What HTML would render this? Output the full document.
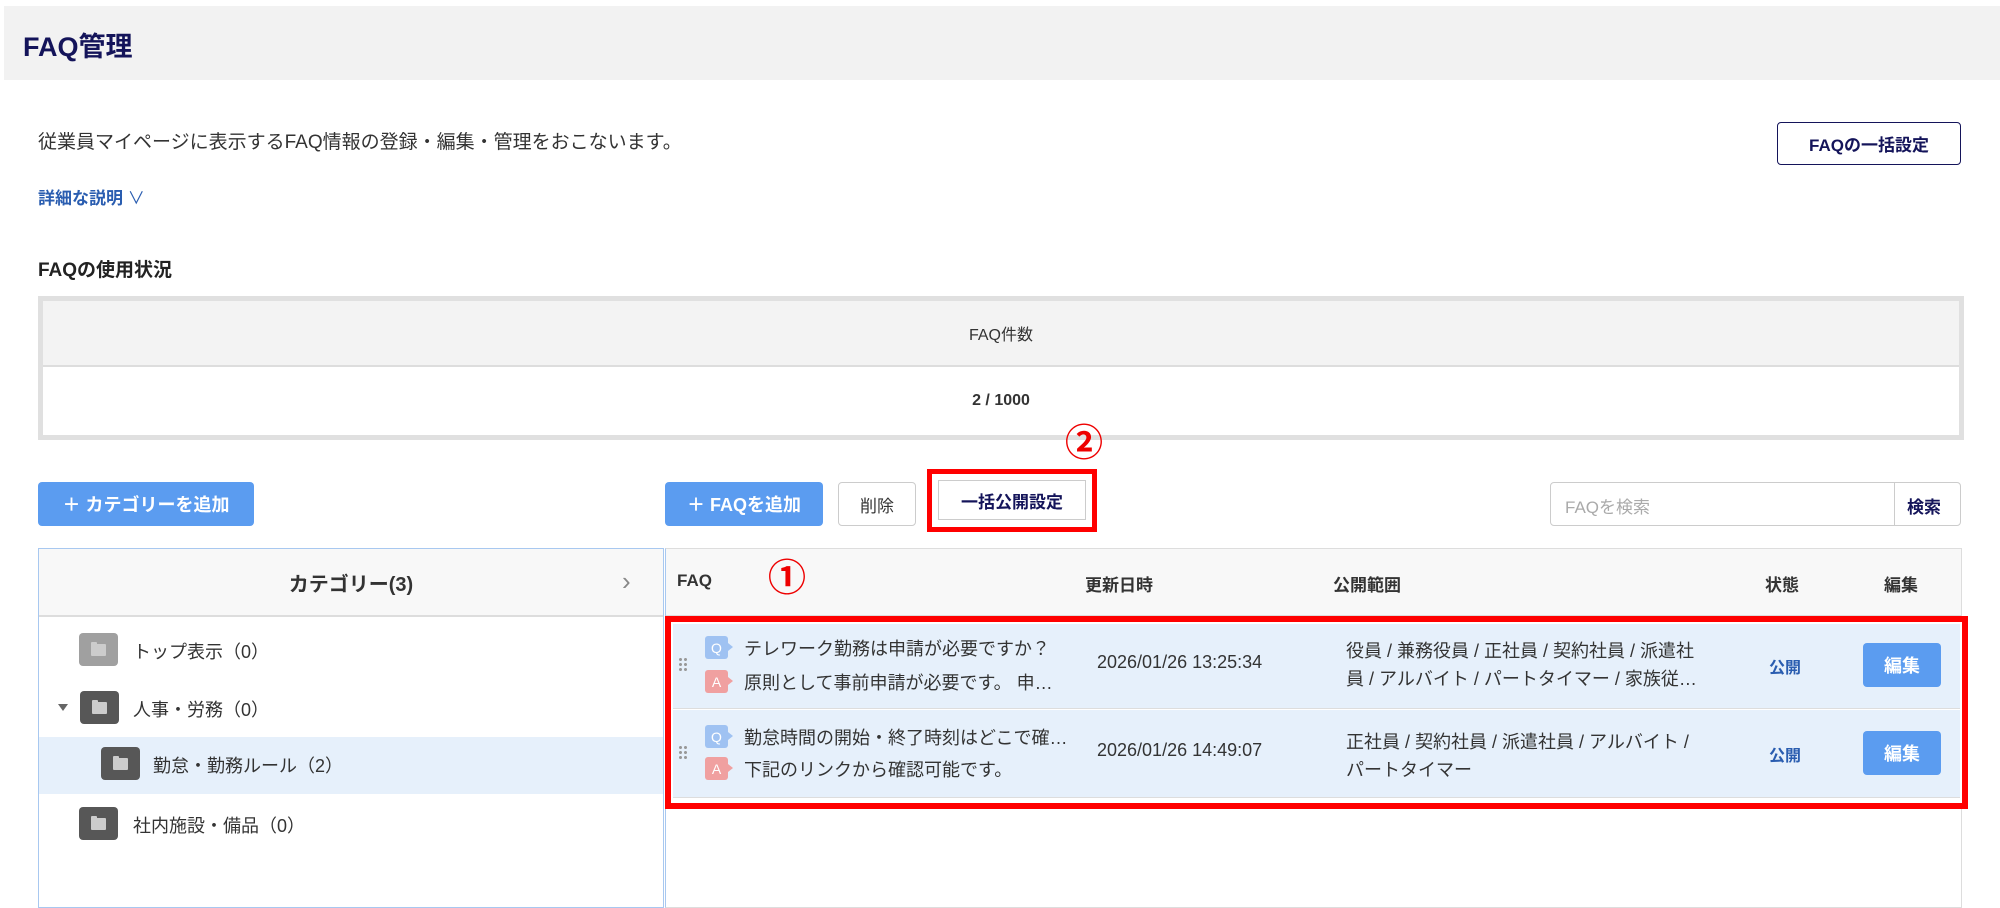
<!DOCTYPE html>
<html><head><meta charset="utf-8"><style>
*{box-sizing:border-box;margin:0;padding:0}
body{width:2000px;height:900px;overflow:hidden;background:#fff;font-family:"Liberation Sans","Noto Sans CJK JP",sans-serif;color:#333;position:relative}
.a{position:absolute;white-space:nowrap}
.btn{position:absolute;border-radius:4px;display:flex;align-items:center;justify-content:center;font-size:17px;font-weight:bold}
.blue{background:#5b9cf0;color:#fff}
.fold{position:absolute;width:39px;height:33px;border-radius:4px;background:#575757}
.fold:after{content:"";position:absolute;left:12px;top:11px;width:15px;height:12px;background:#ccc;border-radius:1px}
.fold:before{content:"";position:absolute;left:12px;top:9px;width:6px;height:3px;background:#ccc;border-radius:1px 1px 0 0}
.t{font-size:18px;color:#333}
.badge{position:absolute;width:23px;height:23px;border-radius:3px;color:#fff;font-size:14px;display:flex;align-items:center;justify-content:center}
.badge:after{content:"";position:absolute;right:-5px;top:7px;border-left:5px solid;border-top:4px solid transparent;border-bottom:4px solid transparent}
.q{background:#9fc2f2}.q:after{border-left-color:#9fc2f2}
.an{background:#f0a0a0}.an:after{border-left-color:#f0a0a0}
.dots{position:absolute;width:10px;height:16px;background-image:radial-gradient(circle,#999 1.4px,transparent 1.6px);background-size:5px 5px}
.circ{position:absolute;color:#e00;font-size:38px;font-weight:bold;line-height:1}
</style></head><body>
<div class="a" style="left:4px;top:6px;width:1996px;height:74px;background:#f2f2f2"></div>
<div class="a" style="left:23px;top:25px;font-size:27px;font-weight:bold;color:#14145a">FAQ管理</div>
<div class="a" style="left:38px;top:127px;font-size:19px;color:#333">従業員マイページに表示するFAQ情報の登録・編集・管理をおこないます。</div>
<div class="btn" style="left:1777px;top:122px;width:184px;height:43px;border:1.5px solid #14145a;color:#14145a;font-size:17px">FAQの一括設定</div>
<div class="a" style="left:38px;top:184px;font-size:17px;font-weight:bold;color:#2a5db0">詳細な説明 <span style="font-weight:normal">∨</span></div>
<div class="a" style="left:38px;top:255px;font-size:19px;font-weight:bold;color:#222">FAQの使用状況</div>
<div class="a" style="left:38px;top:296px;width:1926px;height:144px;border:5px solid #e0e0e0;background:#fff">
 <div style="height:66px;background:#f3f3f3;border-bottom:2px solid #ddd;display:flex;align-items:center;justify-content:center;font-size:16px">FAQ件数</div>
 <div style="height:68px;display:flex;align-items:center;justify-content:center;font-size:16px;font-weight:bold">2 / 1000</div>
</div>
<div class="btn blue" style="left:38px;top:482px;width:216px;height:44px;font-size:18px">＋ カテゴリーを追加</div>
<div class="btn blue" style="left:665px;top:482px;width:158px;height:44px;font-size:18px">＋ FAQを追加</div>
<div class="btn" style="left:838px;top:482px;width:78px;height:44px;border:1px solid #ccc;font-weight:normal;font-size:17px">削除</div>
<div class="a" style="left:927px;top:469px;width:170px;height:63px;border:5px solid #f00;background:#fff"><div style="margin:6px 0 0 6px;width:148px;height:40px;border:1px solid #ccc;display:flex;align-items:center;justify-content:center;font-weight:bold;font-size:17px;color:#14145a">一括公開設定</div></div>
<div class="circ" style="left:1065px;top:425px">②</div>
<div class="a" style="left:1550px;top:482px;width:411px;height:44px;border:1px solid #ccc;border-radius:4px;background:#fff">
 <span style="position:absolute;left:14px;top:10px;color:#aaa;font-size:17px">FAQを検索</span>
 <span style="position:absolute;left:343px;top:0;width:1px;height:42px;background:#ccc"></span>
 <span style="position:absolute;left:356px;top:10px;font-weight:bold;font-size:17px;color:#14145a">検索</span>
</div>
<div class="a" style="left:38px;top:548px;width:626px;height:360px;border:1px solid #a8c8f0;background:#fff">
 <div style="height:68px;background:#f8f8f8;border-bottom:2px solid #ddd;display:flex;align-items:center;justify-content:center;font-size:20px;font-weight:bold;color:#333">カテゴリー(3)</div>
 <div style="position:absolute;left:583px;top:17px;font-size:26px;color:#888">›</div>
 <div style="position:absolute;left:0;top:188px;width:624px;height:57px;background:#e6f0fb"></div>
</div>
<div class="fold" style="left:79px;top:633px;background:#a0a0a0"></div><div class="a t" style="left:133px;top:638px">トップ表示（0）</div>
<div class="a" style="left:58px;top:704px;border-top:7px solid #666;border-left:5px solid transparent;border-right:5px solid transparent"></div>
<div class="fold" style="left:80px;top:691px"></div><div class="a t" style="left:133px;top:696px">人事・労務（0）</div>
<div class="fold" style="left:101px;top:747px"></div><div class="a t" style="left:153px;top:752px">勤怠・勤務ルール（2）</div>
<div class="fold" style="left:79px;top:807px"></div><div class="a t" style="left:133px;top:812px">社内施設・備品（0）</div>
<div class="a" style="left:665px;top:548px;width:1297px;height:360px;border:1px solid #ddd;border-left:1px solid #a8c8f0;background:#fff">
 <div style="height:68px;background:#f8f8f8;border-bottom:2px solid #ddd"></div>
</div>
<div class="a" style="left:677px;top:571px;font-size:17px;font-weight:bold">FAQ</div>
<div class="circ" style="left:768px;top:560px">①</div>
<div class="a" style="left:1085px;top:571px;font-size:17px;font-weight:bold">更新日時</div>
<div class="a" style="left:1333px;top:571px;font-size:17px;font-weight:bold">公開範囲</div>
<div class="a" style="left:1765px;top:571px;font-size:17px;font-weight:bold">状態</div>
<div class="a" style="left:1884px;top:571px;font-size:17px;font-weight:bold">編集</div>
<div class="a" style="left:665px;top:616px;width:1303px;height:193px;border:6px solid #f00;background:#fff">
 <div style="position:absolute;left:2px;top:2px;width:1287px;height:85px;background:#e6f0fb;border-bottom:1px solid #ddd"></div>
 <div style="position:absolute;left:2px;top:88px;width:1287px;height:88px;background:#e6f0fb;border-bottom:1px solid #ddd"></div>
</div>
<div class="dots" style="left:678px;top:657px"></div>
<div class="badge q" style="left:705px;top:636px">Q</div><div class="a t" style="left:744px;top:635px">テレワーク勤務は申請が必要ですか？</div>
<div class="badge an" style="left:705px;top:670px">A</div><div class="a t" style="left:744px;top:669px">原則として事前申請が必要です。 申…</div>
<div class="a t" style="left:1097px;top:652px">2026/01/26 13:25:34</div>
<div class="a t" style="left:1346px;top:637px">役員 / 兼務役員 / 正社員 / 契約社員 / 派遣社</div>
<div class="a t" style="left:1346px;top:665px">員 / アルバイト / パートタイマー / 家族従…</div>
<div class="a" style="left:1769px;top:654px;font-size:16px;font-weight:bold;color:#2a5db0">公開</div>
<div class="btn blue" style="left:1863px;top:643px;width:78px;height:44px;font-size:18px">編集</div>
<div class="dots" style="left:678px;top:745px"></div>
<div class="badge q" style="left:705px;top:725px">Q</div><div class="a t" style="left:744px;top:724px">勤怠時間の開始・終了時刻はどこで確…</div>
<div class="badge an" style="left:705px;top:757px">A</div><div class="a t" style="left:744px;top:756px">下記のリンクから確認可能です。</div>
<div class="a t" style="left:1097px;top:740px">2026/01/26 14:49:07</div>
<div class="a t" style="left:1346px;top:728px">正社員 / 契約社員 / 派遣社員 / アルバイト /</div>
<div class="a t" style="left:1346px;top:756px">パートタイマー</div>
<div class="a" style="left:1769px;top:742px;font-size:16px;font-weight:bold;color:#2a5db0">公開</div>
<div class="btn blue" style="left:1863px;top:731px;width:78px;height:44px;font-size:18px">編集</div>
</body></html>
